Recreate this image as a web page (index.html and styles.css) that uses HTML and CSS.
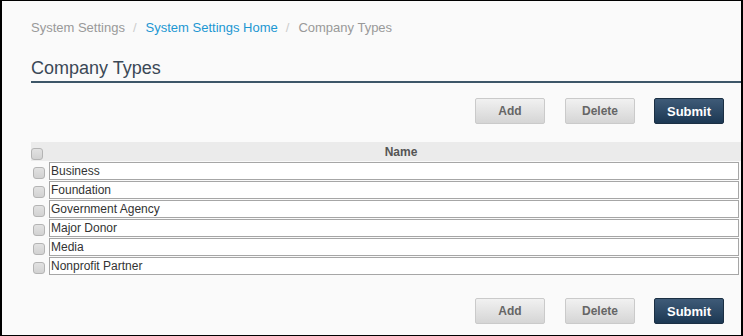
FILE: index.html
```html
<!DOCTYPE html>
<html lang="en">

<head>
    <meta charset="UTF-8">
    <meta name="viewport" content="width=device-width, initial-scale=1.0">
    <title>Company Types</title>
    <link rel="stylesheet" href="styles.css">
</head>

<body>
    <div class="page">
        <ol class="breadcrumb">
            <li>System Settings</li>
            <li><a href="#">System Settings Home</a></li>
            <li>Company Types</li>
        </ol>

        <h1 class="title">Company Types</h1>

        <div class="actions">
            <button class="btn">Add</button>
            <button class="btn">Delete</button>
            <button class="btn btn-primary">Submit</button>
        </div>

        <div class="grid">
            <div class="grid-head">
                <span class="check"><input type="checkbox"></span>
                <span class="name-head">Name</span>
            </div>
            <div class="grid-row">
                <span class="check"><input type="checkbox"></span>
                <input class="name" type="text" value="Business">
            </div>
            <div class="grid-row">
                <span class="check"><input type="checkbox"></span>
                <input class="name" type="text" value="Foundation">
            </div>
            <div class="grid-row">
                <span class="check"><input type="checkbox"></span>
                <input class="name" type="text" value="Government Agency">
            </div>
            <div class="grid-row">
                <span class="check"><input type="checkbox"></span>
                <input class="name" type="text" value="Major Donor">
            </div>
            <div class="grid-row">
                <span class="check"><input type="checkbox"></span>
                <input class="name" type="text" value="Media">
            </div>
            <div class="grid-row">
                <span class="check"><input type="checkbox"></span>
                <input class="name" type="text" value="Nonprofit Partner">
            </div>
        </div>

        <div class="actions actions-bottom">
            <button class="btn">Add</button>
            <button class="btn">Delete</button>
            <button class="btn btn-primary">Submit</button>
        </div>
    </div>
</body>

</html>
```

FILE: styles.css
```css
body {
    margin: 0;
    padding: 0;
    font-family: "Liberation Sans", Arial, sans-serif;
}

.page {
    height: 336px;
    box-sizing: border-box;
    border: 1px solid #000;
    border-left-width: 2px;
    border-right-width: 2px;
    background-color: #fafafa;
    padding: 18px 0 0 29px;
    overflow: hidden;
}

.breadcrumb {
    list-style: none;
    margin: 0;
    padding: 0;
    display: flex;
    font-size: 13px;
    line-height: 18px;
    color: #999;
}

.breadcrumb li + li::before {
    content: "/";
    color: #ccc;
    padding: 0 9px 0 8px;
}

.breadcrumb a {
    color: #1c97d2;
    text-decoration: none;
}

.title {
    margin: 20px 0 0 0;
    padding-bottom: 2px;
    font-size: 18px;
    font-weight: normal;
    line-height: 22px;
    color: #3a4856;
    border-bottom: 2px solid #3d5668;
}

.actions {
    display: flex;
    justify-content: flex-end;
    gap: 20px;
    margin-top: 15px;
    padding-right: 17px;
}

.actions-bottom {
    margin-top: 23px;
}

.btn {
    width: 70px;
    height: 26px;
    padding: 0;
    font-family: inherit;
    font-size: 12px;
    font-weight: bold;
    color: #666;
    background: linear-gradient(#f1f1f1, #d5d5d5);
    border: 1px solid #cacaca;
    border-radius: 2px;
    cursor: pointer;
}

.btn-primary {
    margin-left: -1px;
    font-size: 13px;
    color: #fff;
    background: linear-gradient(#3f5b78, #1c3853);
    border-color: #1b2f43;
}

.grid {
    margin-top: 18px;
}

.grid-head {
    display: flex;
    align-items: flex-end;
    height: 19px;
    background-color: #ebebeb;
    font-size: 12px;
    font-weight: bold;
    color: #555;
}

.name-head {
    flex: 1;
    text-align: center;
    padding-left: 12px;
    align-self: center;
}

.grid-row {
    display: flex;
    align-items: flex-end;
    height: 18px;
    margin-top: 1px;
}

.check {
    width: 18px;
    flex: none;
    display: flex;
    align-items: flex-end;
    padding-bottom: 1px;
}

.check input {
    appearance: none;
    width: 12px;
    height: 12px;
    margin: 0 0 0 2px;
    background: linear-gradient(#e2e2e2, #d2d2d2);
    border: 1px solid #b4b4b4;
    border-radius: 3px;
    box-sizing: border-box;
}

.grid-head .check input {
    margin-left: 0;
}

.name {
    width: 690px;
    height: 18px;
    box-sizing: border-box;
    padding: 0 1px;
    margin: 0;
    font-family: inherit;
    font-size: 12px;
    color: #333;
    background: #fff;
    border: 1px solid #a6a6a6;
    outline: none;
}
```
